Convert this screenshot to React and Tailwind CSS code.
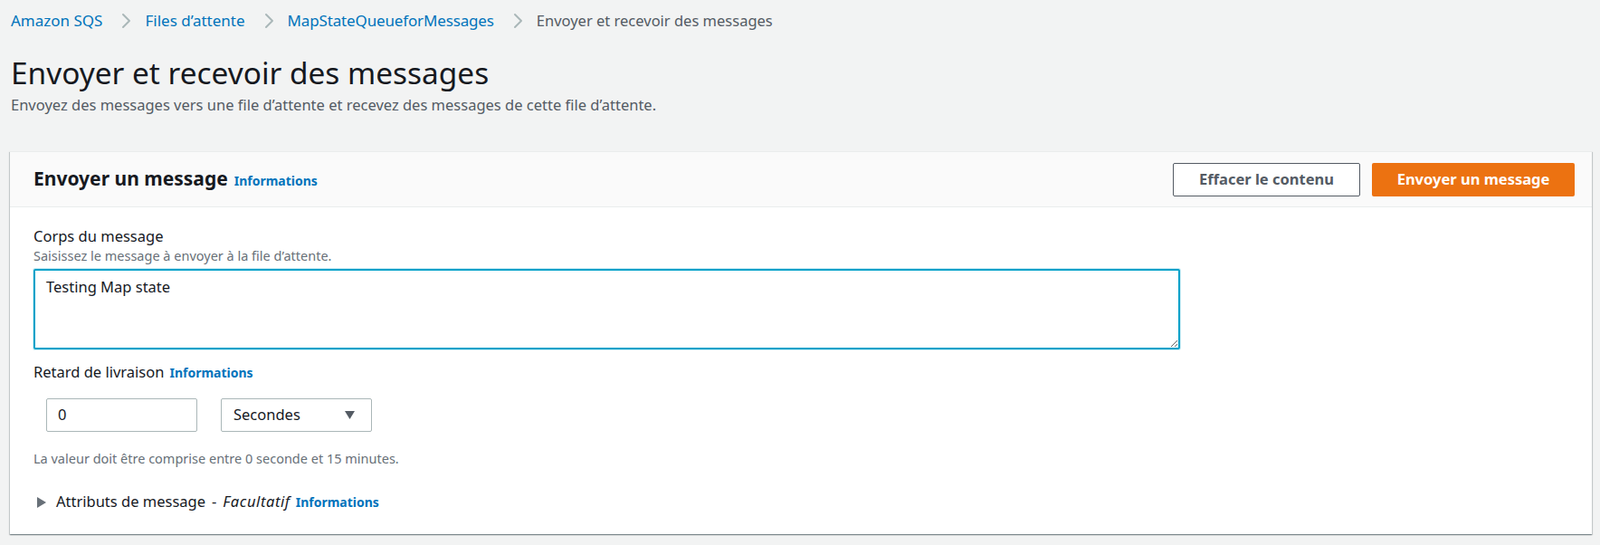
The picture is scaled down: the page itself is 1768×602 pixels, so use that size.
import React from 'react';

const font = { fontFamily: '"Noto Sans", "Open Sans", sans-serif' };

const Chevron = () => (
  <svg className="ml-[21px] mr-[15px]" width="11" height="18" viewBox="0 0 11 18" fill="none" aria-hidden="true">
    <polyline points="2,2 9,9 2,16" stroke="#aab7b8" strokeWidth="2" strokeLinecap="round" strokeLinejoin="round" />
  </svg>
);

const InfoLink = ({ className = '' }) => (
  <a href="#" className={`text-[14px] font-bold text-[#0073bb] ${className}`}>
    Informations
  </a>
);

const crumbs = [
  { label: 'Amazon SQS', cls: '' },
  { label: 'Files d’attente', cls: '' },
  { label: 'MapStateQueueforMessages', cls: 'tracking-[-0.15px]' },
];

const App = () => {
  return (
    <div className="min-h-[602px] w-full bg-[#f2f3f3] text-[#16191f] pl-[11px] pr-[9px]" style={font}>
      {/* Breadcrumbs */}
      <nav className="flex h-[46px] items-center pl-px text-[17px]" aria-label="Breadcrumbs">
        {crumbs.map((c) => (
          <React.Fragment key={c.label}>
            <a href="#" className={`text-[#0073bb] ${c.cls}`}>{c.label}</a>
            <Chevron />
          </React.Fragment>
        ))}
        <span className="text-[16.5px] text-[#545b64]">Envoyer et recevoir des messages</span>
      </nav>

      {/* Page header */}
      <h1 className="mt-[14px] pl-px text-[33.4px] leading-[40px] font-normal">Envoyer et recevoir des messages</h1>
      <p className="mt-[4px] pl-px text-[16.5px] leading-[24px] text-[#545b64]">
        Envoyez des messages vers une file d’attente et recevez des messages de cette file d’attente.
      </p>

      {/* Container */}
      <section className="mt-[39px] bg-white border-t border-[#eaeded] shadow-[0_1px_1px_0_rgba(0,28,36,0.3),1px_1px_1px_0_rgba(0,28,36,0.15),-1px_1px_1px_0_rgba(0,28,36,0.15)]">
        <div className="flex h-[61px] items-center justify-between border-b border-[#eaeded] bg-[#fafafa] pl-[26px] pr-[19px]">
          <h2 className="flex items-baseline gap-[7px] text-[21px] font-bold leading-[28px]">
            Envoyer un message <InfoLink />
          </h2>
          <div className="flex gap-[13px]">
            <button className="flex h-[37px] w-[207px] items-center justify-center rounded-[2px] border border-[#545b64] bg-white text-[16.5px] font-bold text-[#545b64]">
              Effacer le contenu
            </button>
            <button className="flex h-[37px] w-[224px] items-center justify-center rounded-[2px] bg-[#ec7211] text-[16.5px] font-bold text-white">
              Envoyer un message
            </button>
          </div>
        </div>

        <div className="pl-[26px] pt-[20px] pb-[23px]">
          <label className="block text-[16.5px] leading-[24px]">Corps du message</label>
          <div className="text-[14.5px] leading-[18px] text-[#687078]">Saisissez le message à envoyer à la file d’attente.</div>
          <textarea
            readOnly
            defaultValue="Testing Map state"
            className="mt-[6px] block h-[89px] w-[1267px] rounded-[2px] border-2 border-[#00a1c9] px-[12px] pt-[6px] text-[16.5px] leading-[24px] text-[#16191f] shadow-[0_0_0_1px_#cdeef6] outline-none"
            style={font}
          />

          <div className="mt-[13px] flex items-baseline gap-[6px] text-[16.5px] leading-[24px]">
            Retard de livraison <InfoLink />
          </div>

          <div className="mt-[16px] flex gap-[26px] pl-[14px]">
            <div className="flex h-[37px] w-[167px] items-center rounded-[2px] border border-[#aab7b8] bg-white px-[12px] text-[16.5px]">0</div>
            <div className="flex h-[37px] w-[167px] items-center justify-between rounded-[2px] border border-[#aab7b8] bg-white pl-[13px] pr-[18px] text-[16.5px]">
              Secondes
              <svg width="11" height="9" viewBox="0 0 11 9" aria-hidden="true">
                <polygon points="0,0 11,0 5.5,9" fill="#545b64" />
              </svg>
            </div>
          </div>

          <div className="mt-[20px] text-[14.5px] leading-[18px] text-[#687078]">
            La valeur doit être comprise entre 0 seconde et 15 minutes.
          </div>

          <div className="mt-[27px] flex items-center gap-[11px] pl-[4px] text-[16.5px] leading-[24px]">
            <svg width="10" height="12" viewBox="0 0 10 12" aria-hidden="true">
              <polygon points="0,0 10,6 0,12" fill="#687078" />
            </svg>
            <span className="flex items-baseline gap-[6px]">
              <span className="flex items-baseline">
                Attributs de message<span className="mx-[7px]">-</span><i className="tracking-[0.6px]">Facultatif</i>
              </span>
              <InfoLink />
            </span>
          </div>
        </div>
      </section>
    </div>
  );
};

export default App;
